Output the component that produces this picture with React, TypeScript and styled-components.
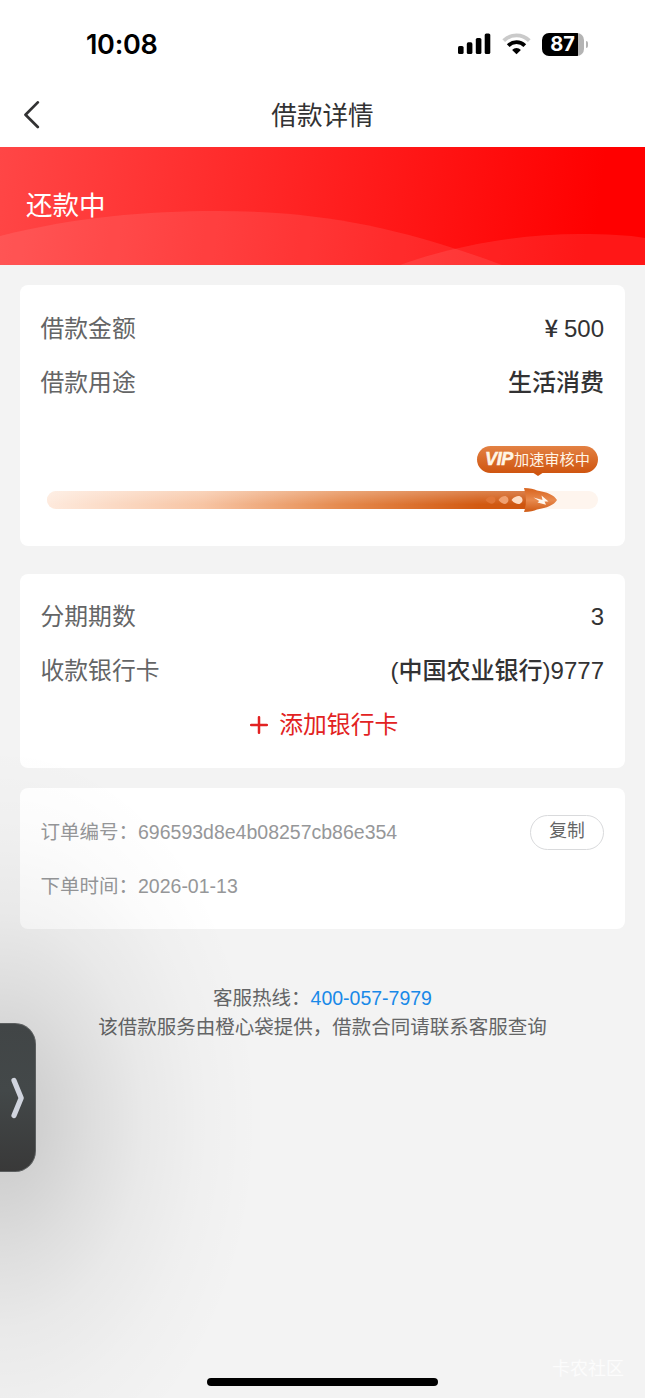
import React from "react";
import styled, { createGlobalStyle } from "styled-components";

const GlobalStyle = createGlobalStyle`
  *, *::before, *::after { box-sizing: border-box; }
  body {
    margin: 0;
    background: #f3f3f3;
    font-family: "Liberation Sans", "Noto Sans CJK SC", sans-serif;
    color: #323233;
  }
`;

const Page = styled.div`
  position: relative;
  display: flex;
  flex-direction: column;
  width: 645px;
  height: 1398px;
  overflow: hidden;
  background: #f3f3f3;
`;

const StatusBar = styled.header`
  display: flex;
  align-items: center;
  justify-content: space-between;
  height: 82px;
  padding: 6px 57px 0 86px;
  background: #fff;
`;

const Clock = styled.span`
  padding-top: 2px;
  font: 600 27px/32px Inter, sans-serif;
  letter-spacing: -0.3px;
  color: #000;
`;

const StatusIcons = styled.div`
  display: flex;
  align-items: center;
  gap: 11px;
  height: 24px;

  svg { display: block; }
`;

const Battery = styled.div`
  display: flex;
  align-items: center;
  gap: 2px;
`;

const BatteryBody = styled.div`
  width: 42px;
  height: 23px;
  border-radius: 7px;
  background: linear-gradient(90deg, #000 0 36.5px, #b4b4b4 36.5px);
  color: #fff;
  font: 700 20px/23px Inter, sans-serif;
  text-align: center;
`;

const BatteryCap = styled.i`
  width: 2.5px;
  height: 7px;
  border-radius: 0 4px 4px 0;
  background: #b4b4b4;
`;

const NavBar = styled.nav`
  display: grid;
  grid-template-columns: 60px 1fr 60px;
  align-items: center;
  height: 65px;
  padding: 0 22px;
  background: #fff;
`;

const NavTitle = styled.h1`
  margin: 0;
  padding-top: 2px;
  font-size: 25.6px;
  line-height: 36px;
  font-weight: 400;
  text-align: center;
`;

const Banner = styled.section`
  position: relative;
  display: flex;
  align-items: center;
  height: 118px;
  padding: 0 26px;
  background: linear-gradient(97deg, #ff4646 0%, #ff0000 92%);
  color: #fff;
  font-size: 26.5px;
`;

const BannerWaves = styled.svg`
  position: absolute;
  inset: 0;
`;

const BannerText = styled.span`
  position: relative;
  line-height: 38px;
`;

const Card = styled.section<{ $height: number; $gap: number; $top: number }>`
  display: flex;
  flex-direction: column;
  height: ${(p) => p.$height}px;
  margin: ${(p) => p.$gap}px 20px 0;
  padding: ${(p) => p.$top}px 21px 0 20.5px;
  border-radius: 8px;
  background: #fff;
`;

const Row = styled.div<{ $small?: boolean }>`
  display: flex;
  align-items: ${(p) => (p.$small ? "center" : "baseline")};
  justify-content: space-between;
  flex: none;
  height: 54px;
  line-height: 54px;
  font-size: ${(p) => (p.$small ? 19.5 : 23.8)}px;
  color: ${(p) => (p.$small ? "#969799" : "#646566")};
`;

const Value = styled.span`
  color: #323233;
  font-size: 24px;
`;

const Medium = styled.span`
  font-family: "Noto Sans CJK SC", sans-serif;
  font-weight: 500;
  line-height: 1;
`;

const Currency = styled(Medium)`
  margin-right: -1px;
`;

const Progress = styled.div`
  display: flex;
  flex-direction: column;
  margin: 36px 6px 0 6.5px;
`;

const VipBubble = styled.div`
  position: relative;
  display: flex;
  align-items: center;
  align-self: flex-end;
  justify-content: center;
  gap: 1px;
  width: 121px;
  height: 27px;
  border-radius: 14px;
  background: linear-gradient(180deg, #e38143, #cf5510);
  color: #fff5e6;
  font-size: 15.2px;
  line-height: 29px;

  &::after {
    content: "";
    position: absolute;
    left: 55px;
    bottom: -3px;
    border: solid transparent;
    border-width: 4px 6px 0;
    border-top-color: #cf5510;
  }
`;

const VipMark = styled.b`
  font: italic 700 18px/27px "Liberation Sans", sans-serif;
  letter-spacing: -0.4px;
  -webkit-text-stroke: 0.5px #fff5e6;
`;

const Track = styled.div`
  height: 18px;
  margin-top: 18px;
  border-radius: 9px;
  background: #fef5ee;
`;

const TrackFill = styled.div`
  position: relative;
  width: 490px;
  height: 18px;
  border-radius: 9px 0 0 9px;
  background:
    linear-gradient(180deg, rgba(255, 255, 255, 0.25), rgba(255, 255, 255, 0) 75%),
    linear-gradient(92deg, #feeadd 0%, #f7c4a3 32%, #e58a4e 60%, #d25a12 88%, #cd540e 100%);
`;

const Rocket = styled.svg`
  position: absolute;
  left: 436px;
  top: -4px;
`;

const AddCard = styled.button`
  display: flex;
  align-items: center;
  justify-content: center;
  gap: 11px;
  height: 54px;
  padding: 0 0 0 4px;
  border: 0;
  background: none;
  color: #e22222;
  font: inherit;
  font-size: 23.8px;
  line-height: 54px;
`;

const CopyButton = styled.button`
  width: 74px;
  height: 35px;
  padding: 0 0 2px;
  border: 1px solid #d9dadc;
  border-radius: 18px;
  background: #fff;
  color: #646566;
  font: inherit;
  font-size: 17.8px;
  line-height: 30px;
`;

const Footer = styled.footer`
  margin-top: 55px;
  color: #646566;
  font-size: 19.5px;
  line-height: 29px;
  text-align: center;
`;

const Hotline = styled.a`
  color: #1989e8;
`;

const DrawerGlow = styled.div`
  position: absolute;
  left: -260px;
  top: 745px;
  width: 520px;
  height: 750px;
  pointer-events: none;
  background: radial-gradient(
    closest-side,
    rgba(0, 0, 0, 0.165) 0%,
    rgba(0, 0, 0, 0.14) 16%,
    rgba(0, 0, 0, 0.085) 36%,
    rgba(0, 0, 0, 0.042) 55%,
    rgba(0, 0, 0, 0.014) 77%,
    rgba(0, 0, 0, 0) 100%
  );
`;

const DrawerHandle = styled.div`
  position: absolute;
  left: 0;
  top: 1023px;
  width: 36px;
  height: 149px;
  border-radius: 0 21px 21px 0;
  background: linear-gradient(180deg, #414546, #434849 45%, #393939);
  border: 1px solid #5b5e5f;
  border-left: 0;
`;

const DrawerArrow = styled.svg`
  display: block;
  margin: 53px 0 0 10px;
`;

const HomeIndicator = styled.div`
  position: absolute;
  left: 207px;
  top: 1378px;
  width: 231px;
  height: 8px;
  border-radius: 4px;
  background: #000;
`;

const Watermark = styled.span`
  position: absolute;
  left: 552px;
  top: 1356px;
  color: rgba(255, 255, 255, 0.75);
  font-size: 18px;
  line-height: 27px;
`;

export default function App() {
  return (
    <Page>
      <GlobalStyle />
      <StatusBar>
        <Clock>10:08</Clock>
        <StatusIcons>
          <svg width="34" height="22" viewBox="0 0 34 22">
            <rect x="1" y="13" width="5.6" height="8" rx="1.6" />
            <rect x="9.8" y="9.3" width="5.6" height="11.7" rx="1.6" />
            <rect x="18.8" y="5" width="5.6" height="16" rx="1.6" />
            <rect x="27.7" y="0.5" width="5.6" height="20.5" rx="1.6" />
          </svg>
          <svg width="29" height="22" viewBox="0 0 29 22" fill="none" strokeWidth="3.8">
            <path d="M1.7 7.7 A18 18 0 0 1 27.3 7.7" stroke="#cacaca" />
            <path d="M6.2 12.6 A11.8 11.8 0 0 1 22.8 12.6" stroke="#000" />
            <path d="M14.5 21.2 L10.1 16.9 A6.2 6.2 0 0 1 18.9 16.9 Z" fill="#000" />
          </svg>
          <Battery>
            <BatteryBody>87</BatteryBody>
            <BatteryCap />
          </Battery>
        </StatusIcons>
      </StatusBar>

      <NavBar>
        <svg width="20" height="28" viewBox="0 0 20 28" fill="none" stroke="#323233" strokeWidth="2.7" strokeLinecap="round" strokeLinejoin="round">
          <path d="M15.8 1.4 L3.5 13.7 L15.8 26" />
        </svg>
        <NavTitle>借款详情</NavTitle>
      </NavBar>

      <Banner>
        <BannerWaves width="645" height="118" viewBox="0 0 645 118" fill="#fff" fillOpacity="0.09">
          <path d="M0 89 C75 70 145 64 218 64 C325 64 405 82 502 118 H0 Z" />
          <path d="M400 118 C455 98 520 87 580 87 C607 87 628 88 645 91 V118 Z" />
        </BannerWaves>
        <BannerText>还款中</BannerText>
      </Banner>

      <Card $height={261} $gap={20} $top={17}>
        <Row>
          <span>借款金额</span>
          <Value>
            <Currency>¥</Currency> 500
          </Value>
        </Row>
        <Row>
          <span>借款用途</span>
          <Value>
            <Medium>生活消费</Medium>
          </Value>
        </Row>
        <Progress>
          <VipBubble>
            <VipMark>VIP</VipMark>
            <span>加速审核中</span>
          </VipBubble>
          <Track>
            <TrackFill>
              <Rocket width="76" height="26" viewBox="0 0 76 26">
                <defs>
                  <linearGradient id="rocket" x1="0" y1="0" x2="0" y2="1">
                    <stop offset="0" stopColor="#d8631d" />
                    <stop offset="0.5" stopColor="#e88a4e" />
                    <stop offset="1" stopColor="#cf5a14" />
                  </linearGradient>
                </defs>
                <path d="M2.5 13 C5 9.8 8 9 10 9.4 Q12.5 10.2 12.5 13 Q12.5 15.8 10 16.6 C8 17 5 16.2 2.5 13 Z" fill="#df7537" />
                <path d="M15.5 13 C18 9.6 21 8.8 23 9.2 Q25.5 10.2 25.5 13 Q25.5 15.8 23 16.8 C21 17.2 18 16.4 15.5 13 Z" fill="#f0a070" />
                <path d="M28.5 13 C31.5 9.2 35 8.6 37 9.2 Q39.6 10.2 39.6 13 Q39.6 15.8 37 16.8 C35 17.4 31.5 16.8 28.5 13 Z" fill="#fddcc4" />
                <path d="M41 1 C47 1 51 2 54 3.5 C64 5 71 8 74 13 C71 18 64 21 54 22.5 C51 24 47 25 41 25 Q45 13 41 1 Z" fill="url(#rocket)" />
                <path d="M50.5 10.4 L59.5 13 L58.5 8.6 L65.5 14.6 L61.5 14.4 L63 17.8 L54.5 15.6 L56.2 14 Z" fill="#fff7ee" />
              </Rocket>
            </TrackFill>
          </Track>
        </Progress>
      </Card>

      <Card $height={194} $gap={28} $top={16}>
        <Row>
          <span>分期期数</span>
          <Value>3</Value>
        </Row>
        <Row>
          <span>收款银行卡</span>
          <Value>
            (<Medium>中国农业银行</Medium>)9777
          </Value>
        </Row>
        <AddCard>
          <svg width="18" height="18" viewBox="0 0 18 18" stroke="#e22222" strokeWidth="2.5" strokeLinecap="round">
            <path d="M9 1.2 V16.8 M1.2 9 H16.8" />
          </svg>
          <span>添加银行卡</span>
        </AddCard>
      </Card>

      <Card $height={141} $gap={20} $top={17}>
        <Row $small>
          <span>订单编号：696593d8e4b08257cb86e354</span>
          <CopyButton>复制</CopyButton>
        </Row>
        <Row $small>
          <span>下单时间：2026-01-13</span>
        </Row>
      </Card>

      <Footer>
        <div>
          客服热线：<Hotline>400-057-7979</Hotline>
        </div>
        <div>该借款服务由橙心袋提供，借款合同请联系客服查询</div>
      </Footer>

      <DrawerGlow />
      <DrawerHandle>
        <DrawerArrow width="16" height="42" viewBox="0 0 16 42" fill="none" stroke="#d0d4de" strokeWidth="5.2" strokeLinecap="round" strokeLinejoin="round">
          <path d="M4 3.5 L11.2 21 L4 38.5" />
        </DrawerArrow>
      </DrawerHandle>
      <Watermark>卡农社区</Watermark>
      <HomeIndicator />
    </Page>
  );
}
